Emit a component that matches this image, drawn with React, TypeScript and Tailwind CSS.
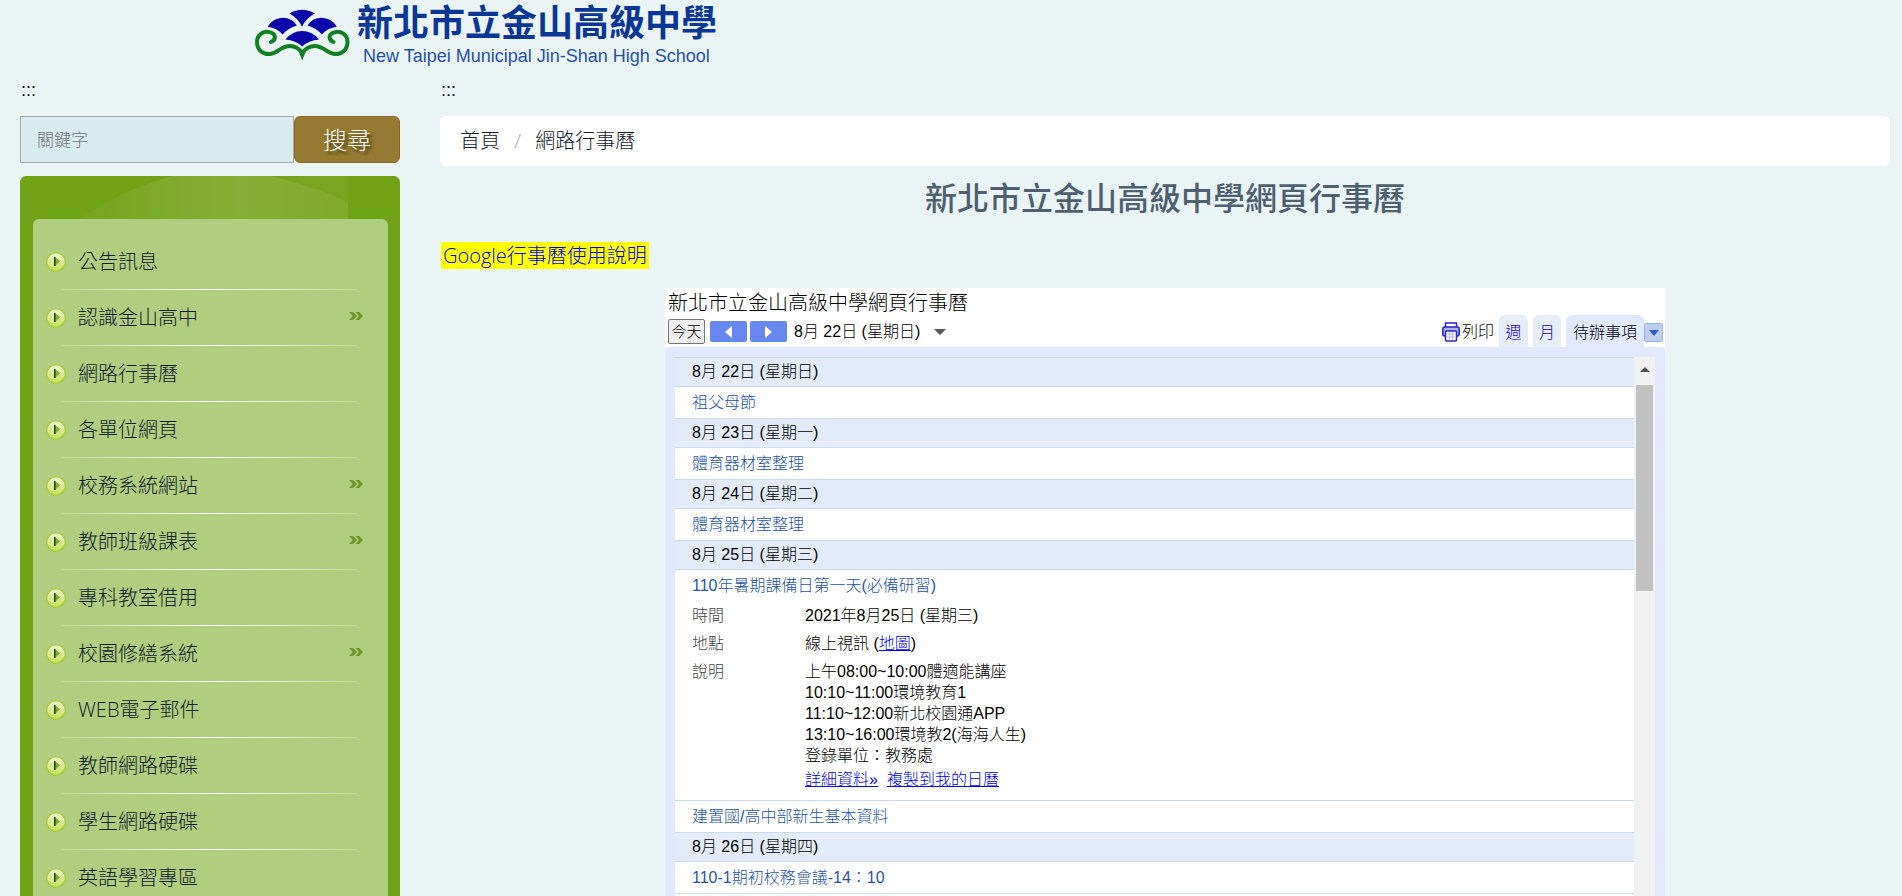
const sans = "font-['Open_Sans','Noto_Sans_CJK_TC',sans-serif]";
const arial = "font-['Liberation_Sans','Noto_Sans_CJK_TC',sans-serif]";

const menu: { label: string; sub?: boolean }[] = [
  { label: "公告訊息" },
  { label: "認識金山高中", sub: true },
  { label: "網路行事曆" },
  { label: "各單位網頁" },
  { label: "校務系統網站", sub: true },
  { label: "教師班級課表", sub: true },
  { label: "專科教室借用" },
  { label: "校園修繕系統", sub: true },
  { label: "WEB電子郵件" },
  { label: "教師網路硬碟" },
  { label: "學生網路硬碟" },
  { label: "英語學習專區" },
];

function Emblem() {
  return (
    <svg viewBox="0 0 96 53" className="mt-2 h-[53px] w-24 shrink-0" aria-hidden="true">
      <g fill="#0a06ab">
        <path d="M35.300 5.500 Q48 -2 61 5.500 Q52 10 48 18.700 Q44 10 35.300 5.500Z" />
        <path d="M13.700 18.700 Q19 10 29 9.800 Q38 10 43 17.500 Q34 20 28.700 26.500 Q23 20 13.700 18.700Z" />
        <path d="M82.800 18.700 Q77.500 10 67.500 9.800 Q58 10 53.500 17.500 Q62.500 20 67.800 26.500 Q73.500 20 82.800 18.700Z" />
        <path d="M31.500 31.500 Q38 23 48 23 Q58.500 23 65 31.500 Q54.500 32.500 48.200 38.500 Q42 32.500 31.500 31.500Z" />
      </g>
      <g fill="none" stroke="#118022" strokeWidth="4" strokeLinecap="round">
        <path d="M17 34 C22 32 22 27 18 25 C10 21 3 27 3 34 C3 42 9 46.500 16 46 C24 45 27 38 36 38 C41 38 45 40.500 48.200 45" />
        <path d="M79.500 34 C74.500 32 74.500 27 78.500 25 C86.500 21 93.500 27 93.500 34 C93.500 42 87.500 46.500 80.500 46 C72.500 45 69.500 38 60.500 38 C55.500 38 51.500 40.500 48.200 45" />
      </g>
      <path d="M44.500 43 L48.200 52.500 L52 43 L48.200 41.500Z" fill="#118022" />
    </svg>
  );
}

function Bullet() {
  return (
    <svg viewBox="0 0 20 20" className="size-5 shrink-0" aria-hidden="true">
      <defs>
        <linearGradient id="bullet" x1="0" y1="0" x2="0" y2="1">
          <stop offset="0" stopColor="#f2f8d8" />
          <stop offset="1" stopColor="#c3e052" />
        </linearGradient>
      </defs>
      <circle cx="10" cy="10" r="9.300" fill="url(#bullet)" stroke="#a4c93a" strokeWidth="1.300" />
      <path d="M9 5 L14 9.500 L9 14Z" fill="#7fae2b" />
      <path d="M8 5h1.500v9H8Z" fill="#22460a" />
    </svg>
  );
}

function SubMarker() {
  return (
    <svg viewBox="0 0 14 8" className="mb-1 h-2 w-3.5" fill="#6a9428" aria-hidden="true">
      <path d="M0 0h4l4 4-4 4H0l4-4Z" />
      <path d="M6.500 0h3.500l4 4-4 4H6.500l3.500-4Z" />
    </svg>
  );
}

function Sidebar() {
  return (
    <aside className={`w-[420px] shrink-0 px-5 ${sans}`}>
      <form className="flex h-[47px]" onSubmit={(e) => e.preventDefault()}>
        <input
          type="text"
          aria-label="關鍵字"
          placeholder="關鍵字"
          className="min-w-0 flex-1 border border-[#a9a9ac] bg-[#d8ebef] px-4 text-[17px] font-light text-gray-700 placeholder:text-[#757575]"
        />
        <button
          type="submit"
          className="w-[106px] rounded-md border border-[#86692a] bg-[#967a31] text-2xl font-light text-white [text-shadow:3px_3px_3px_rgba(0,0,0,0.5)]"
        >
          搜尋
        </button>
      </form>
      <div className="relative mt-[13px] overflow-hidden rounded-md bg-[#71a317] pl-[13px] pr-3 pt-[43px]">
        <svg className="absolute left-0 top-0 h-[43px] w-[328px]" viewBox="0 0 328 43" aria-hidden="true">
          <defs>
            <linearGradient id="glow" x1="0" y1="0.300" x2="1" y2="0.300">
              <stop offset="0" stopColor="#fff" stopOpacity="0.020" />
              <stop offset="0.600" stopColor="#fff" stopOpacity="0.140" />
              <stop offset="1" stopColor="#fff" stopOpacity="0.080" />
            </linearGradient>
          </defs>
          <path d="M60 43 Q100 15 152 0 H250 Q300 12 328 26 V43Z" fill="url(#glow)" />
          <path d="M250 0 H328 V26 Q300 12 250 0Z" fill="#fff" fillOpacity="0.040" />
        </svg>
        <nav className="rounded-t-md bg-[#b0cd80] pb-8 pt-[15px]">
          <ul>
            {menu.map((m) => (
              <li key={m.label}>
                <a
                  href="#"
                  className="flex h-[55px] items-center gap-3 pl-[13px] pr-[25px] text-xl font-light text-[#12202b]"
                >
                  <Bullet />
                  <span className="flex-1">{m.label}</span>
                  {m.sub && <SubMarker />}
                </a>
                <div className="ml-7 mr-[30px] h-px bg-linear-to-r from-white/20 via-white to-white/20" />
              </li>
            ))}
          </ul>
        </nav>
      </div>
    </aside>
  );
}

function DateRow({ children }: { children: string }) {
  return <h3 className="h-[29px] border-t border-[#c8dcec] bg-[#e3ebf8] pl-[17px] leading-7 text-black">{children}</h3>;
}

function EventRow({ children }: { children?: string }) {
  return (
    <div className="h-8 border-t border-[#c8dcec] pl-[17px] leading-8">
      {children && <a href="#" className="text-[#2952a3]">{children}</a>}
    </div>
  );
}

function Printer() {
  return (
    <svg viewBox="0 0 18 20" className="h-5 w-[18px]" fill="none" stroke="#2a1fc8" strokeWidth="1.500" aria-hidden="true">
      <path d="M3.500 5V1h11v4" />
      <rect x="0.800" y="5" width="16.400" height="9" rx="2" fill="#a9b4f5" />
      <rect x="3.500" y="9" width="11" height="10" rx="1" fill="#fff" />
      <path d="M5 12h8M5 15h8M7.500 10v8M10.500 10v8" stroke="#b9b6ee" strokeWidth="1" />
    </svg>
  );
}

function Calendar() {
  return (
    <section className={`mx-auto w-[1000px] bg-white text-base font-light text-black ${arial}`}>
      <h2 className="h-[30px] pl-[3px] text-xl leading-[30px]">新北市立金山高級中學網頁行事曆</h2>
      <div className="flex h-[29px] items-start pl-[3px] pr-[2px]">
        <button className="mt-px h-[25px] w-[37px] rounded-xs border border-[#767676] bg-[#efefef] text-[15px] leading-[22px]">
          今天
        </button>
        <button aria-label="上一頁" className="ml-[5px] mt-[3px] flex h-[21px] w-[37px] items-center justify-center rounded-xs bg-[#6688ee]">
          <svg viewBox="0 0 7 12" className="h-3 w-[7px]"><path d="M7 0v12L0 6Z" fill="#fff" /></svg>
        </button>
        <button aria-label="下一頁" className="ml-[3px] mt-[3px] flex h-[21px] w-[37px] items-center justify-center rounded-xs bg-[#6688ee]">
          <svg viewBox="0 0 7 12" className="h-3 w-[7px]"><path d="M0 0v12L7 6Z" fill="#fff" /></svg>
        </button>
        <button className="ml-[7px] flex h-7 items-center gap-3.5">
          8月 22日 (星期日)
          <svg viewBox="0 0 12 6" className="h-1.5 w-3"><path d="M0 0h12L6 6Z" fill="#555" /></svg>
        </button>
        <div className="ml-auto flex h-[32px] self-end">
          <button className="mr-[5px] flex h-[34px] items-center gap-0.5">
            <Printer />
            列印
          </button>
          <button className="mr-[5px] w-[29px] rounded-t-md bg-[#e6edf7] pt-1 text-[#2200cc]">週</button>
          <button className="mr-[5px] w-7 rounded-t-md bg-[#e6edf7] pt-1 text-[#2200cc]">月</button>
          <button className="w-[78px] rounded-t-md bg-[#e2e8ff] pt-1">待辦事項</button>
          <button aria-label="選單" className="mt-2 flex size-[19px] items-center justify-center rounded-xs border border-[#9ab4e8] bg-[#bfcdee]">
            <svg viewBox="0 0 10 6" className="h-1.5 w-2.5"><path d="M0 0h10L5 6Z" fill="#2a62cc" /></svg>
          </button>
        </div>
      </div>
      <div className="flex rounded-t-sm bg-[#e2e8ff] px-2.5 pt-2.5">
        <div className="min-w-0 flex-1 bg-white">
          <DateRow>8月 22日 (星期日)</DateRow>
          <EventRow>祖父母節</EventRow>
          <DateRow>8月 23日 (星期一)</DateRow>
          <EventRow>體育器材室整理</EventRow>
          <DateRow>8月 24日 (星期二)</DateRow>
          <EventRow>體育器材室整理</EventRow>
          <DateRow>8月 25日 (星期三)</DateRow>
          <EventRow>110年暑期課備日第一天(必備研習)</EventRow>
          <dl className="grid h-[199px] grid-cols-[113px_1fr] content-start gap-y-[7px] pl-[17px] pt-1 leading-[21px]">
            <dt className="text-[#444]">時間</dt>
            <dd>2021年8月25日 (星期三)</dd>
            <dt className="text-[#444]">地點</dt>
            <dd>
              線上視訊 (<a href="#" className="text-[#0000ee] underline">地圖</a>)
            </dd>
            <dt className="text-[#444]">說明</dt>
            <dd>
              上午08:00~10:00體適能講座
              <br />
              10:10~11:00環境教育1
              <br />
              11:10~12:00新北校園通APP
              <br />
              13:10~16:00環境教2(海海人生)
              <br />
              登錄單位：教務處
              <div className="mt-[3px] flex gap-[9px] text-[#0000ee] underline">
                <a href="#">詳細資料»</a>
                <a href="#">複製到我的日曆</a>
              </div>
            </dd>
          </dl>
          <EventRow>建置國/高中部新生基本資料</EventRow>
          <DateRow>8月 26日 (星期四)</DateRow>
          <EventRow>110-1期初校務會議-14：10</EventRow>
          <EventRow />
        </div>
        <div className="flex w-[21px] flex-col items-center bg-[#f1f1f1]">
          <div className="flex h-7 items-center pb-1">
            <svg viewBox="0 0 10 5" className="h-[5px] w-2.5"><path d="M0 5h10L5 0Z" fill="#505050" /></svg>
          </div>
          <div className="h-[206px] w-[17px] bg-[#c1c1c1]" />
        </div>
      </div>
    </section>
  );
}

export default function App() {
  return (
    <div className="h-screen overflow-hidden bg-[#ebf4f5]">
      <header className="flex h-[76px] items-start gap-[7px] pl-[254px]">
        <Emblem />
        <a href="#" className="block whitespace-nowrap pt-0.5 text-[#0a3796]">
          <div className={`text-[36px] font-bold leading-[42px] ${sans}`}>新北市立金山高級中學</div>
          <div className="pl-1.5 font-['Liberation_Sans',sans-serif] text-lg leading-6 text-[#2450a8]">
            New Taipei Municipal Jin-Shan High School
          </div>
        </a>
      </header>
      <div className={`flex h-10 text-lg leading-7 text-black ${arial}`}>
        <div className="w-[420px] shrink-0 pl-[21px]">:::</div>
        <div className="pl-[21px]">:::</div>
      </div>
      <div className="flex items-start">
        <Sidebar />
        <main className={`min-w-0 flex-1 pl-5 pr-3 ${sans}`}>
          <nav className="flex h-[50px] items-center gap-3.5 rounded-md bg-white px-5 text-xl font-light text-[#12202b]">
            <a href="#">首頁</a>
            <span className="font-normal text-[#c4c4c4]">/</span>
            <a href="#">網路行事曆</a>
          </nav>
          <h1 className="mt-3 text-center text-[32px] font-medium leading-10 text-[#4e6070]">
            新北市立金山高級中學網頁行事曆
          </h1>
          <p className="mt-6 h-[46px] pl-px text-xl font-light leading-[27px]">
            <a href="#" className="inline-block bg-[#ffff00] px-0.5 text-[#0000ee]">Google行事曆使用說明</a>
          </p>
          <Calendar />
        </main>
      </div>
    </div>
  );
}
